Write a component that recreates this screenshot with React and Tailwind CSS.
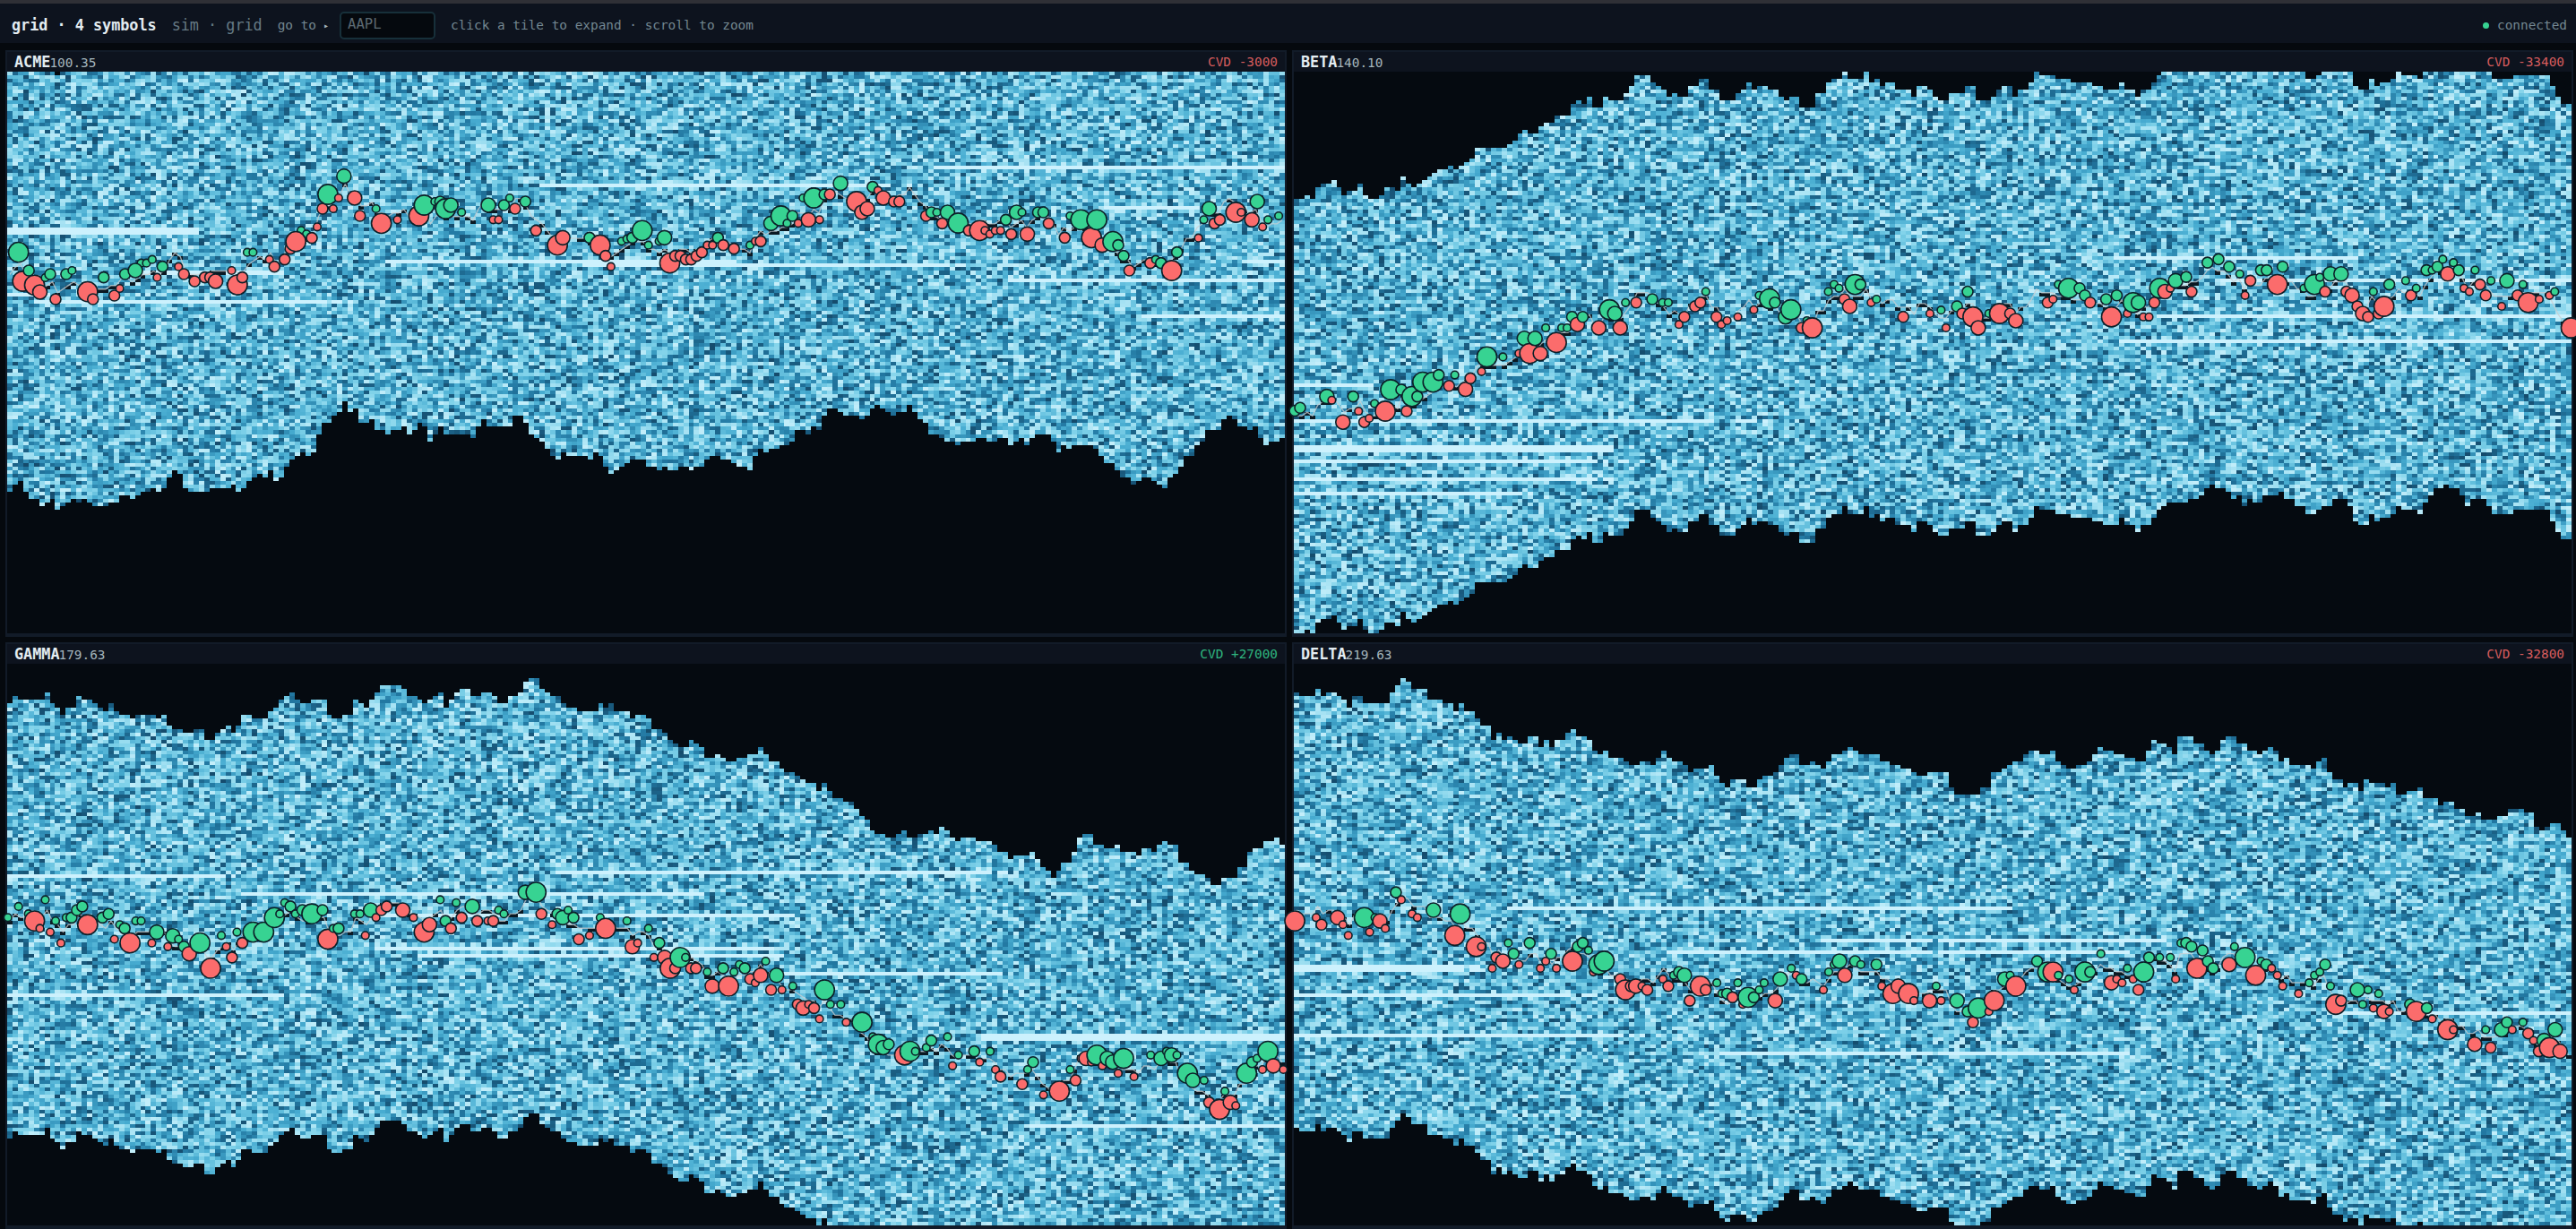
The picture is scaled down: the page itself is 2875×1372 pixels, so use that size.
import React, { useEffect, useMemo, useRef } from "react";

const COLS = 240;
const ROWS = 155;
const W = 1426;
const H = 627;
const CELL_W = W / COLS;
const CELL_H = H / ROWS;
// book depth kept on each side of the mid, in rows
const DEPTH = 60;

const RADIUS = [0, 4.3, 6, 8, 11.1];

const STOPS = [
  [18, 66, 97],
  [34, 120, 162],
  [70, 171, 208],
  [126, 209, 233],
  [202, 241, 252],
];

const WALL = [204, 241, 253];

// Every tile is recorded in two halves. Each half has its own origin and scale:
// edge   "x y" steps of the outer edge of the book
// walls  "x y x2 rows" resting size
// trades "x y size", negative size is a sell
const TILES = [
  {
    symbol: "ACME",
    price: "100.35",
    cvd: -3000,
    seed: 11,
    halves: [
      {
        at: [-8, 80, 2.178, 3],
        side: 1,
        edge: "17 1165 30 1143 45 1132 57 1168 70 1190 96 1215 109 1205 122 1195 135 1228 148 1216 161 1204 174 1192 187 1200 200 1192 213 1200 226 1215 265 1204 290 1181 316 1192 329 1181 342 1170 367 1160 380 1165 393 1158 406 1120 419 1096 432 1108 445 1158 458 1165 510 1160 549 1158 562 1144 575 1165 588 1154 600 1130 613 1117 626 1108 639 1119 652 1096 665 1130 678 1120 691 1084 704 1055 717 1045 730 1037 743 1048 756 1036 769 975 782 941 808 916 821 898 834 870 847 905 860 893 873 940 899 928 910 962 936 975 949 965 975 953 988 975 1001 962 1014 941 1027 952 1040 997 1053 975 1066 952 1080 976 1145 987 1157 952 1170 930 1183 952 1248 915 1274 940 1287 976 1300 987 1313 999 1326 1023 1337 1048 1350 1055 1363 1036 1376 1050 1430 1055 1443 1038 1456 1050 1468 1085 1481 1105 1494 1095 1507 1084 1520 1072 1533 1058 1560 1055",
        walls: "17 290 537 2 310 438 720 1 17 510 140 1 85 535 880 1 1310 138 1568 1 935 402 1568 1 1420 413 1568 1",
        trades: "45 365 4 55 462 -4 70 426 2 84 475 -4 97 498 -3 110 450 1 122 438 2 135 522 -2 161 438 2 175 426 1 213 497 -4 226 522 -2 252 449 2 278 510 -2 291 486 -1 304 438 2 343 401 1 329 426 3 356 401 1 370 389 1 382 449 -1 395 413 2 434 413 -1 447 438 -2 473 462 -2 498 449 -2 511 449 -2 524 462 -3 563 426 -1 577 474 -4 589 449 -2 601 365 1 615 365 1 655 389 -1 667 413 -2 692 389 -2 706 353 -2 732 292 1 745 304 1 758 317 -2 719 329 -4 771 280 -1 784 219 -2 797 171 4 810 219 -1 823 183 -1 836 110 3 862 183 -3 875 243 -2 914 219 1 927 268 -4 966 256 -1 1018 243 -4 1031 207 4 1057 195 1 1070 195 2 1083 219 4 1096 207 3 1122 231 1 1187 207 3 1199 256 -1 1212 256 -1 1225 207 2 1239 183 1 1252 219 -2 1277 195 2 1303 292 -2 1355 341 -4 1368 316 -3 1433 316 2 1459 341 -4 1472 377 -2 1485 413 -1 1511 328 1 1524 320 1 1537 316 2 1561 292 4",
      },
      {
        at: [712, 80, 2.178, 3],
        side: 1,
        edge: "0 1082 26 1092 40 1085 55 1092 80 1087 106 1092 120 1087 145 1053 158 1050 184 1058 210 1071 222 1083 248 1094 260 1050 273 1025 286 1034 299 1022 325 1015 352 999 365 963 390 975 403 952 416 963 429 914 442 890 468 904 481 914 516 927 530 914 543 892 556 872 569 893 582 904 597 913 610 905 635 878 648 904 660 926 673 940 686 972 712 987 725 999 752 1011 765 999 778 1002 804 990 830 998 856 990 880 1014 893 1000 906 987 919 1012 932 990 945 979 983 1002 997 1034 1010 1013 1023 1022 1036 1013 1088 1020 1101 1048 1113 1071 1138 1095 1151 1119 1177 1141 1190 1130 1203 1122 1229 1133 1242 1145 1255 1156 1268 1120 1281 1107 1294 1085 1307 1048 1333 1011 1346 999 1359 963 1398 930 1411 915 1424 928 1437 950 1463 963 1476 952 1487 987 1500 1011 1513 999 1539 987",
        walls: "0 138 650 1 700 77 1568 1 0 402 230 1 0 413 820 1 880 452 1560 1 1110 220 1360 1 1206 582 1560 1 1470 402 1555 1",
        trades: "8 341 1 34 328 1 47 316 3 60 401 -4 73 377 -2 86 377 -2 99 389 -2 112 389 -2 125 377 -2 138 365 -2 151 341 -1 164 341 -1 177 316 2 190 341 -2 216 353 -2 255 341 1 268 328 -1 281 328 -2 306 268 3 330 243 4 345 268 1 358 243 2 372 268 -1 397 256 -3 424 256 -1 384 183 1 410 183 4 436 171 2 449 171 -2 475 134 3 514 195 -4 527 231 -3 540 219 -3 553 146 2 566 158 -1 579 183 -3 605 195 -2 618 195 -2 683 243 -2 696 231 2 709 231 1 735 231 3 722 268 -2 761 267 4 787 292 -2 813 292 -4 826 292 -1 838 304 -1 851 292 -1 864 292 -1 877 256 2 890 304 -2 903 231 3 916 231 1 929 304 -3 955 231 2 968 231 2 981 268 -2 1020 316 -2 1033 243 1 1059 256 4 1085 316 -4 1098 256 4 1111 341 -3 1137 329 4 1150 341 2 1163 377 2 1177 426 -2 1228 401 -2 1241 389 1 1254 401 2 1280 426 -4 1293 365 2 1345 317 -1 1358 256 1 1371 219 3 1384 268 -2 1397 256 -2 1436 231 -4 1449 231 -1 1475 256 -3 1488 195 3 1501 280 -1 1514 256 1 1540 243 1",
      },
    ],
  },
  {
    symbol: "BETA",
    price: "140.10",
    cvd: -33400,
    seed: 23,
    halves: [
      {
        at: [-4, -20, 2.178, 2.376],
        side: 1,
        edge: "11 1535 37 1525 50 1535 63 1507 76 1497 102 1488 115 1507 128 1526 141 1515 167 1497 178 1526 191 1535 217 1527 230 1507 256 1515 269 1478 282 1497 295 1507 308 1495 321 1487 334 1478 347 1468 360 1459 386 1450 399 1456 412 1450 425 1440 438 1430 451 1402 464 1398 527 1392 540 1382 553 1364 566 1355 579 1362 605 1343 618 1334 645 1315 684 1288 697 1276 710 1287 723 1268 736 1296 762 1266 775 1274 810 1257 823 1240 836 1215 875 1230 888 1240 904 1250 917 1266 930 1258 943 1268 969 1240 995 1220 1020 1245 1046 1275 1085 1262 1098 1245 1111 1233 1124 1247 1137 1237 1163 1250 1190 1265 1203 1282 1216 1272 1240 1296 1279 1257 1305 1232 1318 1220 1344 1205 1355 1217 1394 1200 1407 1232 1420 1223 1433 1240 1446 1232 1472 1245 1510 1266 1524 1241 1550 1250 1562 1268",
        walls: "11 881 220 1 11 977 1190 1 11 1048 860 2 11 1082 860 1 11 1130 800 1 11 1167 640 1",
        trades: "11 947 2 24 939 2 89 909 3 101 919 -1 128 977 -3 153 909 2 166 948 -1 180 977 -2 192 967 -1 205 928 1 244 891 4 231 948 -4 270 891 2 283 948 -2 296 909 4 309 909 2 322 871 4 347 871 4 361 852 2 386 881 -2 400 852 1 426 890 -3 438 861 -2 465 843 -1 478 804 4 517 804 1 556 795 -1 569 755 3 582 795 -4 595 755 3 608 795 -3 621 727 1 647 766 -4 660 727 1 673 727 1 685 698 2 698 718 -3 711 698 2 750 727 -3 776 679 4 789 689 3 802 727 -3 815 660 1 841 660 -2 880 651 2 905 660 1 919 660 1 945 718 -1 958 698 -2 984 670 -2 997 660 -2 1010 631 1 1036 698 -2 1048 718 -1 1062 708 -1 1088 698 -1 1127 679 -1 1140 641 1 1165 650 4 1178 660 2 1204 698 3 1217 679 4 1243 727 -2 1256 708 1 1269 727 -4 1308 631 1 1322 612 1 1334 622 1 1347 651 -2 1360 670 -3 1373 612 4 1386 612 2 1412 660 -1 1425 651 1 1490 698 -2 1555 689 -1",
      },
      {
        at: [716, -20, 2.193, 2.376],
        side: 1,
        edge: "0 1273 34 1262 47 1254 73 1240 96 1275 135 1264 148 1253 161 1244 189 1265 202 1245 228 1225 241 1205 254 1213 293 1216 332 1228 370 1232 385 1240 411 1246 449 1230 462 1247 488 1267 501 1247 527 1227 540 1212 553 1205 566 1195 592 1190 620 1182 645 1172 658 1156 671 1144 684 1155 710 1163 722 1182 735 1174 748 1200 761 1180 774 1190 800 1170 840 1162 853 1180 879 1198 905 1218 931 1208 944 1197 970 1186 1008 1198 1021 1238 1034 1246 1060 1222 1073 1236 1086 1228 1112 1218 1125 1200 1138 1212 1151 1207 1177 1217 1190 1187 1203 1172 1220 1155 1244 1143 1257 1154 1283 1173 1293 1200 1306 1181 1345 1205 1358 1217 1411 1215 1450 1210 1503 1237 1516 1267 1530 1286",
        walls: "435 539 1060 1 535 698 1558 1 450 767 1558 1 700 604 1558 1",
        trades: "14 680 1 26 727 -1 53 670 2 66 689 -2 92 698 -4 105 727 -3 79 631 2 131 689 1 157 689 -4 183 689 -2 197 708 -3 275 660 -2 288 651 -1 301 612 1 326 622 4 353 622 2 366 641 2 379 660 -2 418 651 2 431 698 -4 444 641 2 470 689 -1 484 660 4 497 660 3 509 698 -1 523 698 -1 536 660 -2 549 622 4 562 631 -3 575 622 -1 588 602 3 614 592 2 627 631 -2 666 554 2 693 545 2 719 565 2 745 584 1 758 641 -1 771 602 -2 797 574 2 811 574 2 837 612 -4 850 565 2 902 622 1 928 612 4 941 593 1 954 631 -2 967 584 3 993 584 3 1006 631 -2 1020 641 -3 1033 670 -2 1046 689 -3 1059 698 -2 1072 631 1 1085 689 -2 1098 670 -4 1111 612 2 1151 602 1 1164 641 -2 1177 622 1 1202 574 2 1216 574 1 1229 565 2 1242 545 1 1254 584 -3 1268 554 1 1281 574 2 1294 622 -1 1307 631 -1 1321 574 1 1333 612 -2 1347 641 -2 1360 602 1 1386 670 -1 1399 602 3 1425 641 -2 1438 612 1 1451 660 -4 1478 651 -1 1503 641 -1 1516 631 1 1556 727 -4",
      },
    ],
  },
  {
    symbol: "GAMMA",
    price: "179.63",
    cvd: 27000,
    seed: 37,
    halves: [
      {
        at: [-8, -21, 2.178, 2.405],
        side: 1,
        edge: "17 1325 30 1307 43 1316 70 1315 108 1298 121 1325 135 1335 148 1352 160 1335 186 1306 200 1315 226 1325 240 1335 252 1345 265 1325 278 1340 290 1352 316 1362 329 1353 380 1362 393 1355 406 1383 420 1392 445 1403 471 1390 497 1420 523 1402 536 1392 549 1382 562 1402 575 1382 588 1355 613 1362 650 1345 663 1335 676 1316 690 1306 704 1298 717 1315 730 1325 756 1316 795 1350 808 1362 834 1353 860 1316 872 1325 884 1333 897 1313 910 1296 923 1277 975 1288 988 1305 1014 1315 1027 1322 1040 1315 1053 1306 1066 1298 1079 1333 1092 1315 1105 1297 1118 1290 1144 1305 1170 1297 1196 1305 1208 1323 1235 1306 1260 1296 1273 1268 1286 1260 1312 1285 1325 1295 1338 1306 1363 1325 1376 1335 1400 1345 1454 1325 1467 1335 1480 1325 1493 1345 1532 1362 1545 1352",
        walls: "17 620 600 1 585 665 1568 1 900 722 1568 1 17 945 790 1 910 810 1568 1 1010 829 1568 1 1350 608 1568 1",
        trades: "19 732 1 45 702 1 69 722 1 84 741 -4 97 761 -1 110 684 1 122 771 -1 135 741 1 148 800 -1 161 732 1 174 732 2 187 712 2 200 702 2 213 751 -4 249 732 2 264 722 2 278 790 -1 291 751 1 303 761 2 316 800 -4 330 741 1 343 741 1 369 800 -1 381 771 3 408 810 -1 420 781 3 434 790 1 447 810 2 460 829 -3 486 800 4 512 868 -4 538 780 1 550 810 -1 564 839 -2 576 771 1 589 800 -2 615 771 4 641 771 4 667 732 4 680 722 1 692 692 1 706 702 2 718 722 1 735 712 2 758 722 4 784 712 2 797 790 -4 810 761 1 823 761 2 862 722 1 875 722 1 888 780 -1 901 712 3 914 732 -1 927 712 -2 940 702 -2 979 712 -3 1005 732 -1 1031 771 -4 1044 751 -3 1070 684 1 1083 741 2 1096 761 -2 1109 692 1 1122 732 -2 1148 702 3 1160 741 -2 1186 741 -1 1199 741 -2 1212 712 1 1225 722 1 1277 664 3 1303 664 4 1316 722 -2 1342 751 -1 1355 722 2 1368 732 3 1381 712 1 1394 732 2 1407 790 -2 1433 780 -1 1459 732 1 1472 761 -4 1524 741 1 1537 810 -3 1550 800 -1",
      },
      {
        at: [712, -21, 2.148, 2.405],
        side: -1,
        edge: "0 195 14 226 40 236 53 258 66 268 80 276 104 256 117 264 130 275 143 302 170 292 183 303 196 314 217 304 243 292 268 276 281 293 294 313 320 330 333 342 359 350 372 361 385 374 410 390 423 374 436 390 449 406 475 420 500 438 513 460 526 467 539 496 552 505 578 516 600 504 612 497 625 516 651 507 677 498 690 503 703 487 716 498 729 515 742 526 755 516 794 527 830 535 843 555 870 573 880 563 919 556 932 573 945 593 958 604 971 620 984 602 997 585 1023 555 1036 516 1049 506 1075 533 1100 545 1122 536 1135 555 1174 563 1187 545 1213 555 1226 535 1239 527 1252 533 1278 582 1304 602 1317 613 1342 622 1355 640 1380 622 1416 592 1442 555 1455 545 1468 543 1481 527 1507 517 1520 533",
        walls: "0 608 930 1 0 665 160 1 0 722 390 1 0 829 370 1 0 815 350 1 270 878 910 1 805 1056 1530 2 920 1292 1530 1",
        trades: "8 761 1 21 839 -1 34 800 2 47 839 -3 60 868 -4 72 868 -2 84 839 4 97 839 1 110 868 -2 122 868 -2 149 878 1 161 916 -3 187 868 2 200 916 -4 213 878 1 226 858 1 239 868 2 252 897 -2 264 907 -1 277 887 -3 289 849 1 302 926 -2 315 887 3 328 926 -1 354 916 1 366 965 -2 379 975 -3 392 965 -1 405 975 -2 418 1004 -1 430 926 4 444 965 1 469 965 1 482 1013 -1 520 1013 4 546 1052 1 559 1072 4 571 1081 3 584 1072 2 622 1101 -4 635 1091 4 648 1091 1 674 1081 1 686 1062 2 725 1052 1 737 1130 -1 751 1101 1 789 1091 2 802 1120 -1 827 1091 1 840 1140 -1 852 1159 -2 904 1179 -2 917 1140 1 930 1120 2 955 1208 -1 993 1198 -4 1019 1140 1 1032 1169 -2 1045 1110 -1 1057 1110 -3 1070 1120 -1 1083 1101 4 1096 1130 -1 1108 1110 3 1121 1120 3 1134 1150 -1 1147 1110 4 1172 1159 -1 1212 1101 1 1237 1110 3 1250 1091 1 1262 1101 3 1275 1101 1 1300 1150 4 1313 1169 3 1340 1169 1 1352 1228 -2 1377 1247 -4 1390 1198 1 1403 1228 -3 1416 1237 -1 1442 1150 4 1455 1120 2 1467 1110 1 1480 1140 -1 1493 1091 4 1506 1130 -3 1530 1140 -1",
      },
    ],
  },
  {
    symbol: "DELTA",
    price: "219.63",
    cvd: -32800,
    seed: 53,
    halves: [
      {
        at: [-4, -21, 2.178, 2.405],
        side: 1,
        edge: "11 1295 24 1305 63 1290 76 1305 89 1298 115 1306 128 1315 141 1333 154 1307 180 1325 206 1323 243 1298 256 1278 269 1260 282 1266 295 1285 308 1290 334 1313 360 1316 373 1325 399 1345 412 1325 425 1345 451 1365 464 1385 488 1420 501 1400 514 1420 527 1410 540 1420 553 1432 579 1412 605 1438 618 1420 631 1440 644 1420 670 1403 683 1395 696 1410 722 1420 735 1450 748 1460 761 1448 774 1468 810 1478 825 1488 850 1478 876 1488 889 1470 902 1450 915 1470 930 1478 955 1488 968 1508 981 1498 1020 1495 1033 1518 1046 1535 1059 1547 1070 1525 1096 1528 1109 1548 1135 1527 1148 1518 1174 1508 1187 1488 1200 1470 1213 1465 1238 1488 1264 1480 1277 1490 1290 1496 1303 1480 1316 1462 1342 1455 1355 1440 1368 1452 1381 1465 1420 1462 1433 1478 1458 1490 1485 1498 1510 1510 1524 1518 1550 1508",
        walls: "11 872 480 2 11 945 730 1 11 1052 900 1 520 705 1568 1 910 820 1568 1 1290 792 1568 1 1045 1100 1568 1",
        trades: "11 741 -4 63 732 -1 76 751 -2 115 732 -3 128 751 -1 141 780 -1 180 732 4 206 732 1 193 771 -1 218 741 -3 231 761 -1 257 664 2 270 684 -1 296 722 -1 309 732 -1 348 712 3 400 780 -4 413 722 4 452 810 -4 465 810 -1 491 868 -1 501 839 -2 517 849 -3 530 800 1 543 829 2 556 858 -1 582 800 2 608 868 -1 621 849 -1 634 829 2 647 868 -1 686 849 -4 699 810 2 711 800 2 725 820 1 737 878 -1 750 858 4 763 849 4 802 897 -2 815 926 -4 828 916 -2 840 916 -3 855 916 -1 868 926 -2 906 897 -1 919 916 -2 932 887 1 945 878 2 958 887 3 971 955 -2 997 916 -4 1010 926 -2 1037 907 1 1049 936 1 1062 936 2 1075 946 -2 1088 907 1 1100 965 -1 1113 946 4 1127 946 2 1140 926 1 1152 907 1 1179 955 -3 1191 897 3 1218 868 1 1230 887 -1 1243 897 2 1296 926 -1 1309 878 1 1322 858 1 1335 849 3 1348 887 -3 1373 849 2 1387 858 1 1425 858 2 1438 916 -1 1465 936 -4 1478 916 -3 1503 936 -4 1516 955 -1 1554 955 -3",
      },
      {
        at: [716, -21, 2.193, 2.405],
        side: -1,
        edge: "0 343 34 378 47 402 96 402 109 380 135 345 161 335 174 322 189 314 215 295 228 285 254 290 280 285 293 314 306 325 320 332 345 320 372 314 385 294 398 276 411 286 437 295 462 303 488 313 514 280 527 258 540 266 566 275 579 295 592 247 632 265 658 285 671 293 684 285 697 258 710 246 735 265 761 285 787 292 800 287 813 276 826 286 839 316 852 305 865 322 892 322 918 330 931 314 944 306 957 343 970 360 996 380 1010 372 1035 390 1048 362 1061 373 1100 383 1113 375 1126 400 1151 395 1177 382 1190 406 1229 430 1242 420 1268 436 1293 460 1319 450 1332 466 1371 463 1397 438 1410 440 1436 450 1462 485 1475 500 1488 487 1501 478 1530 498 1543 520",
        walls: "0 792 600 1 0 820 520 1 0 705 220 1 0 1100 530 1 980 994 1558 1",
        trades: "2 916 1 14 955 -1 53 955 3 79 984 2 92 1013 -2 105 975 4 131 984 -1 144 955 -4 170 897 3 183 887 1 197 916 -4 249 849 2 275 878 4 288 878 -4 301 887 1 327 897 1 340 926 -1 366 878 4 379 878 2 405 829 1 431 907 -3 444 897 -1 457 907 -1 470 868 1 484 897 -1 510 878 4 497 926 -2 523 839 2 549 839 1 575 839 1 588 897 -1 601 800 1 614 800 2 627 810 2 654 820 2 640 868 -4 667 849 2 680 868 2 719 858 -3 732 810 1 758 839 4 784 887 -4 797 849 1 810 858 2 823 868 -1 837 887 -1 850 916 -1 889 936 -1 915 907 1 928 887 1 941 878 1 954 858 2 967 916 1 980 965 -4 993 955 -2 1033 926 3 1046 965 1 1059 926 1 1072 975 -1 1085 936 1 1098 984 -3 1111 984 -1 1162 965 2 1177 984 -4 1203 975 2 1216 1004 -1 1254 1033 -4 1268 1033 -1 1320 1072 -3 1347 1033 1 1359 1081 -2 1386 1033 3 1399 1013 2 1412 1033 -1 1438 1013 1 1451 1043 -2 1464 1062 -1 1477 1091 -2 1490 1062 3 1503 1081 -4 1517 1033 3 1529 1091 -3",
      },
    ],
  },
];

const chunk = (text, size) => {
  const numbers = text.split(" ").map(Number);
  const out = [];
  for (let i = 0; i < numbers.length; i += size) {
    out.push(numbers.slice(i, i + size));
  }
  return out;
};

const random = (seed) => {
  let a = seed;
  return () => {
    a = (a + 0x6d2b79f5) | 0;
    let t = Math.imul(a ^ (a >>> 15), 1 | a);
    t = (t + Math.imul(t ^ (t >>> 7), 61 | t)) ^ t;
    return ((t ^ (t >>> 14)) >>> 0) / 4294967296;
  };
};

const heat = (value) => {
  const v = Math.min(0.999, Math.max(0, value)) * (STOPS.length - 1);
  const i = Math.floor(v);
  return STOPS[i].map((c, k) => c + (STOPS[i + 1][k] - c) * (v - i));
};

const readTile = (tile) => {
  const steps = [];
  const walls = [];
  const trades = [];

  tile.halves.forEach(({ at, side, edge, walls: w, trades: t }) => {
    const [ox, oy, sx, sy] = at;
    const px = (x) => ox + x / sx;
    const py = (y) => oy + y / sy;

    chunk(edge, 2).forEach(([x, y]) => {
      const row = Math.round(py(y) / CELL_H);
      steps.push([Math.round(px(x) / CELL_W), row - side * DEPTH]);
    });
    chunk(w, 4).forEach(([x, y, x2, rows]) => {
      walls.push({
        from: Math.round(px(x) / CELL_W),
        to: Math.round(px(x2) / CELL_W),
        row: Math.round(py(y) / CELL_H - rows / 2),
        rows,
        open: x2 >= 1525,
      });
    });
    chunk(t, 3).forEach(([x, y, size]) => {
      trades.push({ x: px(x), y: py(y), size });
    });
  });

  const mid = [];
  let s = 0;
  for (let c = 0; c < COLS; c++) {
    while (s + 1 < steps.length && steps[s + 1][0] <= c) s++;
    mid.push(steps[s][1]);
  }
  return { mid, walls, trades };
};

const Heatmap = ({ mid, walls, seed }) => {
  const ref = useRef(null);

  useEffect(() => {
    const ctx = ref.current.getContext("2d");
    const image = ctx.createImageData(COLS, ROWS);
    const next = random(seed);
    const put = (c, r, [red, green, blue]) => {
      if (r < 0 || r >= ROWS) return;
      const i = (r * COLS + c) * 4;
      image.data[i] = red;
      image.data[i + 1] = green;
      image.data[i + 2] = blue;
      image.data[i + 3] = 255;
    };

    for (let c = 0; c < COLS; c++) {
      for (let r = mid[c] - DEPTH; r < mid[c] + DEPTH; r++) {
        put(c, r, heat(0.04 + Math.pow(next(), 0.85) * 0.94));
      }
    }

    walls.forEach(({ from, to, row, rows, open }) => {
      for (let c = Math.max(0, from); c < Math.min(COLS, to); c++) {
        const left = (to - c) / (to - from);
        if (!open && left < 0.15 && next() > left * 6) continue;
        for (let k = 0; k < rows; k++) put(c, row + k, WALL);
      }
    });

    // empty level between bid and ask
    for (let c = 0; c < COLS; c++) {
      if (next() < 0.6) put(c, mid[c], [10, 24, 34]);
    }

    ctx.putImageData(image, 0, 0);
  }, [mid, walls, seed]);

  return (
    <canvas
      ref={ref}
      width={COLS}
      height={ROWS}
      className="block w-full h-full [image-rendering:pixelated]"
    />
  );
};

const Tile = ({ tile }) => {
  const { mid, walls, trades } = useMemo(() => readTile(tile), [tile]);
  const line = mid
    .map((r, c) => `${((c + 0.5) * CELL_W).toFixed(1)},${(r * CELL_H).toFixed(1)}`)
    .join(" ");

  return (
    <section className="border-2 border-b-4 border-[#121b28] bg-[#050a10]">
      <div className="h-[22px] pl-2 pr-2 flex items-center justify-between bg-[#0d131e] whitespace-nowrap">
        <div className="flex items-baseline">
          <span className="text-[16.8px] leading-[22px] font-bold text-[#e3ecf1]">
            {tile.symbol}
          </span>
          <span className="-ml-px text-[14.4px] leading-[22px] text-[#a5b6bd]">
            {tile.price}
          </span>
        </div>
        <span
          className={`text-[14.4px] leading-[22px] ${
            tile.cvd < 0 ? "text-[#d65c5d]" : "text-[#2fb57f]"
          }`}
        >
          CVD {tile.cvd > 0 ? "+" : ""}
          {tile.cvd}
        </span>
      </div>

      <div className="relative h-[627px]">
        <Heatmap mid={mid} walls={walls} seed={tile.seed} />
        <svg
          viewBox={`0 0 ${W} ${H}`}
          className="absolute inset-0 w-full h-full overflow-visible"
        >
          <polyline
            points={line}
            fill="none"
            stroke="#c9ced0"
            strokeOpacity="0.75"
            strokeWidth="1.4"
          />
          {trades.map(({ x, y, size }, i) => (
            <circle
              key={i}
              cx={x}
              cy={y}
              r={RADIUS[Math.abs(size)]}
              fill={size > 0 ? "#37d392" : "#fb6c6c"}
              stroke="#0c2029"
              strokeWidth="1.6"
            />
          ))}
        </svg>
      </div>
    </section>
  );
};

const App = () => {
  return (
    <div className="w-[2875px] h-[1372px] overflow-hidden flex flex-col bg-[#05090e] font-['DejaVu_Sans_Mono',monospace]">
      <div className="h-1 shrink-0 bg-[#2f3036]" />
      <header className="h-[44px] shrink-0 pt-[5px] pl-[13px] pr-[10px] flex items-center bg-[#0d131e] text-[14.4px] text-[#738791] whitespace-nowrap">
        <span className="text-[16.8px] font-bold text-[#e3ecf1]">
          grid · 4 symbols
        </span>
        <span className="ml-[17px] text-[16.8px] text-[#667a84]">sim · grid</span>
        <span className="ml-[17px] flex items-center">
          go to
          <span className="w-[9px] ml-[8px] text-[10px] text-[#a3b4bc]">▸</span>
        </span>
        <input
          placeholder="AAPL"
          className="ml-[9px] w-[107px] h-[31px] px-[7px] pb-[3px] rounded-[5px] border-2 border-[#17303a] bg-[#05090e] text-[15.6px] placeholder:text-[#5d6a72] outline-none"
        />
        <span className="ml-[17px]">
          click a tile to expand · scroll to zoom
        </span>
        <span className="ml-auto flex items-center gap-[9px]">
          <span className="w-[7px] h-[7px] rounded-full bg-[#37d392]" />
          connected
        </span>
      </header>

      <main className="pt-2 pl-[6px] pr-[3px] grid grid-cols-2 gap-[6px]">
        {TILES.map((tile) => (
          <Tile key={tile.symbol} tile={tile} />
        ))}
      </main>
    </div>
  );
};

export default App;
